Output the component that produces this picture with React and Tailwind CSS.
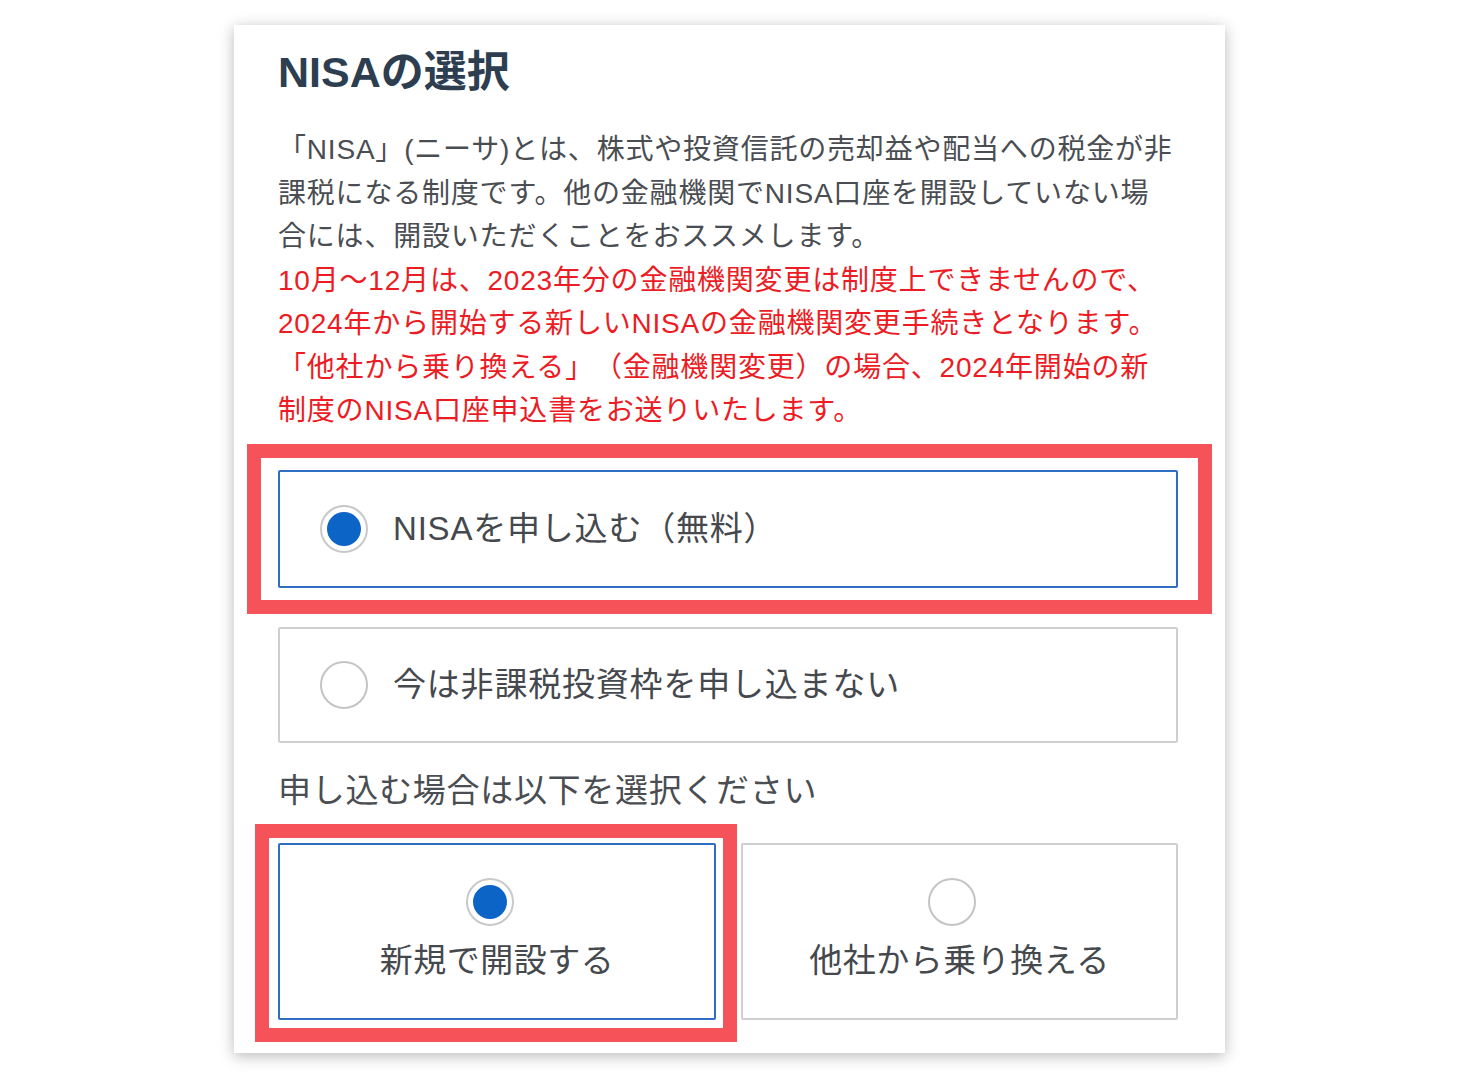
const jp = { fontFamily: '"Liberation Sans", "Noto Sans CJK JP", sans-serif' };

function Radio({ checked, className = "" }) {
  return (
    <span
      className={
        "flex h-[48px] w-[48px] shrink-0 items-center justify-center rounded-full border-2 bg-white " +
        (checked ? "border-[#c9c9c9] " : "border-[#c4c4c4] ") +
        className
      }
    >
      {checked && <span className="h-[34px] w-[34px] rounded-full bg-[#0b64c6]" />}
    </span>
  );
}

export default function App() {
  return (
    <div className="min-h-screen bg-white pt-[25px] [text-spacing-trim:space-all]" style={jp}>
      <div className="ml-[234px] w-[991px] bg-white pl-[44px] pr-[47px] pt-[23px] pb-[33px] shadow-[0_3px_14px_rgba(0,0,0,0.28)]">
        <h1 className="text-[43px] font-bold leading-[48px] text-[#2c3e50]">NISAの選択</h1>

        <p className="mt-[32px] text-[28px] leading-[43.5px] text-[#4a4d52] tracking-[0.8px]">
          「NISA」(ニーサ)とは、株式や投資信託の売却益や配当への税金が非
          <br />
          課税になる制度です。他の金融機関でNISA口座を開設していない場
          <br />
          合には、開設いただくことをおススメします。
          <br />
          <span className="text-[#ec1c24]">
            10月～12月は、2023年分の金融機関変更は制度上できませんので、
            <br />
            2024年から開始する新しいNISAの金融機関変更手続きとなります。
            <br />
            「他社から乗り換える」（金融機関変更）の場合、2024年開始の新
            <br />
            制度のNISA口座申込書をお送りいたします。
          </span>
        </p>

        <div className="relative mt-[37px]">
          <div className="flex h-[118px] items-center gap-[25px] rounded-[2px] border-2 border-[#2f6fc1] pl-[40px]">
            <Radio checked />
            <span className="text-[33px] tracking-[0.8px] text-[#45484d]">NISAを申し込む（無料）</span>
          </div>
          <div className="pointer-events-none absolute -left-[31px] -right-[34px] -top-[26px] -bottom-[26px] border-[14px] border-[#f6525a]" />
        </div>

        <div className="mt-[39px] flex h-[116px] items-center gap-[25px] rounded-[2px] border-2 border-[#cfcfcf] pl-[40px]">
          <Radio />
          <span className="text-[33px] tracking-[0.8px] text-[#45484d]">今は非課税投資枠を申し込まない</span>
        </div>

        <p className="mt-[26px] text-[33px] leading-[44px] tracking-[0.7px] text-[#4a4d52]">申し込む場合は以下を選択ください</p>

        <div className="mt-[30px] grid grid-cols-[438px_437px] gap-[25px]">
          <div className="relative">
            <div className="flex h-[177px] flex-col items-center rounded-[2px] border-2 border-[#2f6fc1] pt-[33px]">
              <Radio checked className="mr-[15px]" />
              <span className="mt-[13px] text-[33px] leading-[44px] tracking-[0.5px] text-[#45484d]">新規で開設する</span>
            </div>
            <div className="pointer-events-none absolute -left-[23px] -right-[21px] -top-[19px] -bottom-[22px] border-[14px] border-[#f6525a]" />
          </div>
          <div className="flex h-[177px] flex-col items-center rounded-[2px] border-2 border-[#cfcfcf] pt-[33px]">
            <Radio className="mr-[15px]" />
            <span className="mt-[13px] text-[33px] leading-[44px] tracking-[0.5px] text-[#45484d]">他社から乗り換える</span>
          </div>
        </div>
      </div>
    </div>
  );
}
